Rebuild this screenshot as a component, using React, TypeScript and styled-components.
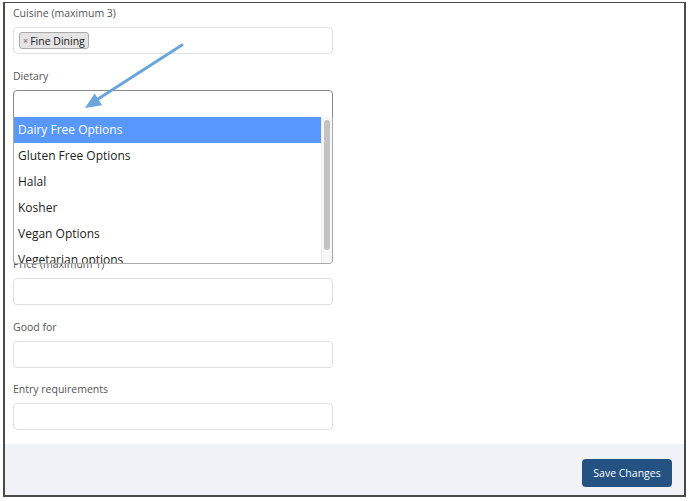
import React from 'react'
import styled, { createGlobalStyle } from 'styled-components'

const GlobalStyle = createGlobalStyle`
  html, body {
    margin: 0;
    padding: 0;
    background: #ffffff;
    font-family: 'Open Sans', 'Liberation Sans', sans-serif;
  }
`

const dietaryOptions = [
  'Dairy Free Options',
  'Gluten Free Options',
  'Halal',
  'Kosher',
  'Vegan Options',
  'Vegetarian options',
]

const App = () => {
  return (
    <>
      <GlobalStyle />
      <StyledFrame>
        <StyledForm>
          <StyledField>
            <StyledLabel>Cuisine (maximum 3)</StyledLabel>
            <StyledInput>
              <StyledTag>
                <span>×</span>Fine Dining
              </StyledTag>
            </StyledInput>
          </StyledField>

          <StyledField $extra={125}>
            <StyledLabel>Dietary</StyledLabel>
            <StyledSelectWrap>
              <StyledInput $open />
              <StyledDropdown>
                <StyledOptions>
                  {dietaryOptions.map((option, i) => (
                    <StyledOption key={option} $active={i === 0}>
                      {option}
                    </StyledOption>
                  ))}
                </StyledOptions>
                <StyledScrollTrack>
                  <StyledScrollThumb />
                </StyledScrollTrack>
              </StyledDropdown>
            </StyledSelectWrap>
          </StyledField>

          <StyledField>
            <StyledLabel>Price (maximum 1)</StyledLabel>
            <StyledInput />
          </StyledField>

          <StyledField>
            <StyledLabel>Good for</StyledLabel>
            <StyledInput />
          </StyledField>

          <StyledField>
            <StyledLabel>Entry requirements</StyledLabel>
            <StyledInput />
          </StyledField>

          <StyledArrow width="112" height="72" viewBox="0 0 112 72">
            <line x1="106" y1="3" x2="22" y2="57" stroke="#6aa5db" strokeWidth="3" strokeLinecap="round" />
            <polygon points="9,66 18.6,51.4 26.2,63.2" fill="#6aa5db" />
          </StyledArrow>
        </StyledForm>

        <StyledFooter>
          <StyledButton>Save Changes</StyledButton>
        </StyledFooter>
      </StyledFrame>
    </>
  )
}

const StyledFrame = styled.div`
  box-sizing: border-box;
  margin: 2px 0 0 3px;
  width: 683px;
  height: 495px;
  border: 1px solid #4a4a4a;
  border-left-width: 2px;
  border-right-width: 2px;
  border-bottom-width: 2px;
  display: flex;
  flex-direction: column;
`

const StyledForm = styled.div`
  position: relative;
  flex: 1;
  padding: 2px 0 0 8px;
`

const StyledField = styled.div<{ $extra?: number }>`
  width: 320px;
  margin-bottom: ${({ $extra }) => 13.5 + ($extra || 0)}px;
`

const StyledLabel = styled.div`
  font-size: 10.5px;
  line-height: 16px;
  color: #555;
  margin-bottom: 6px;
`

const StyledInput = styled.div<{ $open?: boolean }>`
  box-sizing: border-box;
  height: ${({ $open }) => ($open ? 28 : 27)}px;
  border: 1px solid ${({ $open }) => ($open ? '#8a8a8a' : '#dedede')};
  border-radius: ${({ $open }) => ($open ? '4px 4px 0 0' : '4px')};
  background: #fff;
  display: flex;
  align-items: center;
  padding: 0 5px;
`

const StyledTag = styled.span`
  display: inline-flex;
  align-items: center;
  height: 15px;
  padding: 0 3px;
  background: #e4e4e4;
  border: 1px solid #aaa;
  border-radius: 3px;
  font-size: 10.5px;
  color: #222;

  span {
    color: #888;
    font-size: 9px;
    margin-right: 2px;
    font-weight: 700;
  }
`

const StyledSelectWrap = styled.div`
  position: relative;
`

const StyledDropdown = styled.div`
  position: absolute;
  left: 0;
  top: 27px;
  z-index: 2;
  box-sizing: border-box;
  width: 320px;
  height: 147px;
  background: #fff;
  border: 1px solid #aaa;
  border-top: none;
  border-radius: 0 0 4px 4px;
  display: flex;
  overflow: hidden;
`

const StyledOptions = styled.div`
  flex: 1;
`

const StyledOption = styled.div<{ $active?: boolean }>`
  height: 26px;
  line-height: 26px;
  padding-left: 4px;
  font-size: 12px;
  color: ${({ $active }) => ($active ? '#fff' : '#222')};
  background: ${({ $active }) => ($active ? '#5897fb' : 'transparent')};
  white-space: nowrap;
`

const StyledScrollTrack = styled.div`
  width: 11px;
  background: #f7f7f7;
  border-left: 1px solid #ececec;
  padding: 3px 0;
  box-sizing: border-box;
  display: flex;
  justify-content: center;
`

const StyledScrollThumb = styled.div`
  width: 6px;
  height: 130px;
  background: #c3c3c3;
  border-radius: 3px;
`

const StyledArrow = styled.svg`
  position: absolute;
  left: 71px;
  top: 39px;
  z-index: 3;
`

const StyledFooter = styled.div`
  background: #f1f2f7;
  height: 52px;
  display: flex;
  justify-content: flex-end;
  align-items: flex-start;
  padding: 15px 12px 0 0;
  box-sizing: border-box;
`

const StyledButton = styled.button`
  width: 90px;
  height: 28px;
  border: none;
  border-radius: 4px;
  background: #245282;
  color: #fff;
  font-family: 'Open Sans', 'Liberation Sans', sans-serif;
  font-size: 10.5px;
  font-weight: 500;
  cursor: pointer;
`

export default App
